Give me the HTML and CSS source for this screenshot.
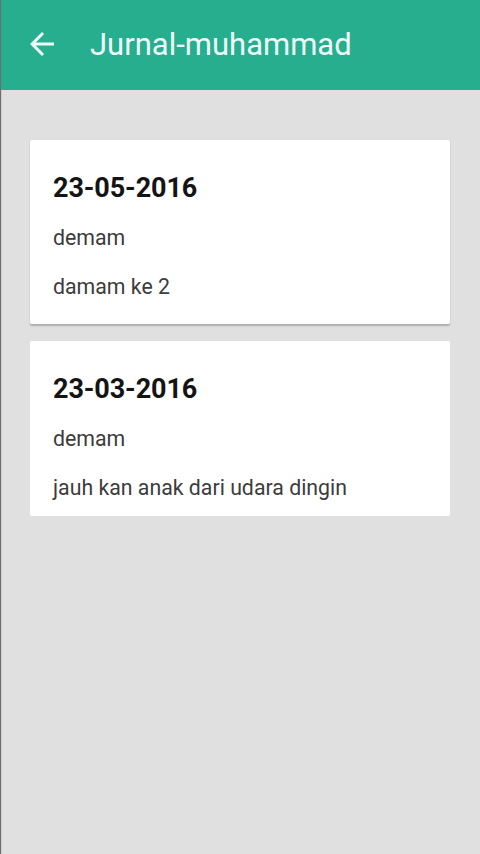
FILE: index.html
```html
<!DOCTYPE html>
<html>
<head>
<meta charset="utf-8">
<link rel="stylesheet" href="styles.css">
</head>
<body>
<div class="screen">
  <header class="toolbar">
    <svg class="back" viewBox="0 0 24 24" width="36" height="36"><path d="M20 11H7.83l5.59-5.59L12 4l-8 8 8 8 1.41-1.41L7.83 13H20v-2z" fill="currentColor"/></svg>
    <h1 class="title">Jurnal-muhammad</h1>
  </header>
  <main class="list">
    <section class="card card-first">
      <div class="date">23-05-2016</div>
      <div class="line">demam</div>
      <div class="line">damam ke 2</div>
    </section>
    <section class="card card-second">
      <div class="date">23-03-2016</div>
      <div class="line">demam</div>
      <div class="line">jauh kan anak dari udara dingin</div>
    </section>
  </main>
</div>
</body>
</html>
```

FILE: styles.css
```css
html, body {
  margin: 0;
  padding: 0;
  height: 100%;
}
body {
  font-family: Roboto, "Liberation Sans", sans-serif;
  background: #e0e0e0;
}
.screen {
  height: 854px;
  box-sizing: border-box;
  border-left: 1px solid #6e6e6e;
  box-shadow: inset 1px 0 0 #cfcfcf;
  background: #e0e0e0;
  display: flex;
  flex-direction: column;
}
.toolbar {
  height: 90px;
  flex: 0 0 90px;
  background: #26ae8f;
  color: #eefdf7;
  display: flex;
  align-items: center;
  padding-left: 23px;
  box-sizing: border-box;
}
.back {
  display: block;
  margin-top: -2px;
}
.title {
  margin: 0 0 0 30px;
  font-weight: 400;
  font-size: 31px;
  letter-spacing: 0;
  margin-top: -1px;
}
.list {
  padding: 50px 30px 0 29px;
  display: flex;
  flex-direction: column;
  gap: 17px;
}
.card {
  background: #fff;
  border-radius: 2px;
  padding: 0 23px;
  box-sizing: border-box;
}
.card-first {
  height: 184px;
  box-shadow: 0 1.5px 1.5px rgba(0,0,0,0.22);
}
.card-second {
  height: 175px;
}
.date {
  font-weight: 700;
  font-size: 27px;
  letter-spacing: -0.1px;
  color: #141414;
  line-height: 34px;
  padding-top: 31px;
}
.line {
  font-size: 21.3px;
  color: #3c3c3c;
  line-height: 28px;
  margin-top: 21px;
}
.date + .line {
  margin-top: 19px;
}
```
